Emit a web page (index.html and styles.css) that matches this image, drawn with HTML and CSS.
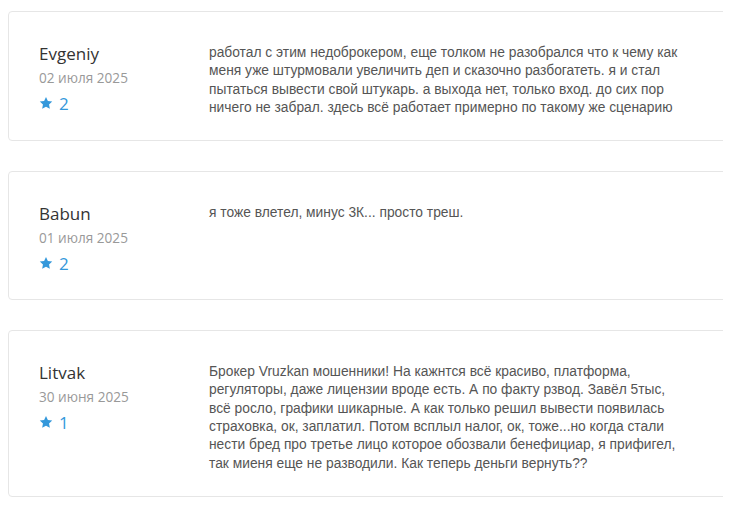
FILE: index.html
```html
<!DOCTYPE html>
<html lang="ru">
<head>
  <meta charset="UTF-8">
  <meta name="viewport" content="width=device-width, initial-scale=1.0">
  <title>Отзывы</title>
  <link rel="stylesheet" href="styles.css">
</head>
<body>
  <div class="reviews">
    <div class="review">
      <div class="review-author">
        <div class="review-name">Evgeniy</div>
        <div class="review-date">02 июля 2025</div>
        <div class="review-rating">
          <svg class="star" viewBox="0 0 24 24"><path d="M12 1.5l3.2 6.9 7.5.9-5.5 5.2 1.4 7.5L12 18.3 5.4 22l1.4-7.5L1.3 9.3l7.5-.9z"/></svg>
          <span>2</span>
        </div>
      </div>
      <p class="review-text">работал с этим недоброкером, еще толком не разобрался что к чему как меня уже штурмовали увеличить деп и сказочно разбогатеть. я и стал пытаться вывести свой штукарь. а выхода нет, только вход. до сих пор ничего не забрал. здесь всё работает примерно по такому же сценарию</p>
    </div>
    <div class="review">
      <div class="review-author">
        <div class="review-name">Babun</div>
        <div class="review-date">01 июля 2025</div>
        <div class="review-rating">
          <svg class="star" viewBox="0 0 24 24"><path d="M12 1.5l3.2 6.9 7.5.9-5.5 5.2 1.4 7.5L12 18.3 5.4 22l1.4-7.5L1.3 9.3l7.5-.9z"/></svg>
          <span>2</span>
        </div>
      </div>
      <p class="review-text">я тоже влетел, минус 3К... просто треш.</p>
    </div>
    <div class="review">
      <div class="review-author">
        <div class="review-name">Litvak</div>
        <div class="review-date">30 июня 2025</div>
        <div class="review-rating">
          <svg class="star" viewBox="0 0 24 24"><path d="M12 1.5l3.2 6.9 7.5.9-5.5 5.2 1.4 7.5L12 18.3 5.4 22l1.4-7.5L1.3 9.3l7.5-.9z"/></svg>
          <span>1</span>
        </div>
      </div>
      <p class="review-text">Брокер Vruzkan мошенники! На кажнтся всё красиво, платформа, регуляторы, даже лицензии вроде есть. А по факту рзвод. Завёл 5тыс, всё росло, графики шикарные. А как только решил вывести появилась страховка, ок, заплатил. Потом всплыл налог, ок, тоже...но когда стали нести бред про третье лицо которое обозвали бенефициар, я прифигел, так миеня еще не разводили. Как теперь деньги вернуть??</p>
    </div>
  </div>
</body>
</html>
```

FILE: styles.css
```css
html,
body {
  overflow: hidden;
}

body {
  margin: 8px;
  background: #fff;
}

.reviews {
  padding-top: 3px;
  margin-right: -60px;
}

.review {
  display: flex;
  border: 1px solid #e6e6e6;
  border-radius: 4px;
  padding: 30px 30px 23px;
  margin-bottom: 30px;
  background: #fff;
}

.review-author {
  flex: 0 0 170px;
  font-family: "Open Sans", sans-serif;
}

.review-name {
  font-size: 17px;
  line-height: 24px;
  color: #333;
}

.review-date {
  font-size: 13.6px;
  line-height: 24px;
  color: #999;
}

.review-rating {
  display: flex;
  align-items: center;
  gap: 6px;
  height: 26px;
  color: #3498db;
  font-size: 17px;
}

.star {
  width: 14px;
  height: 14px;
  fill: #3498db;
}

.review-text {
  margin: 2px 0 0;
  width: 474px;
  font-family: "Liberation Sans", Arial, sans-serif;
  font-size: 13.8px;
  line-height: 18.3px;
  color: #555;
}
```
